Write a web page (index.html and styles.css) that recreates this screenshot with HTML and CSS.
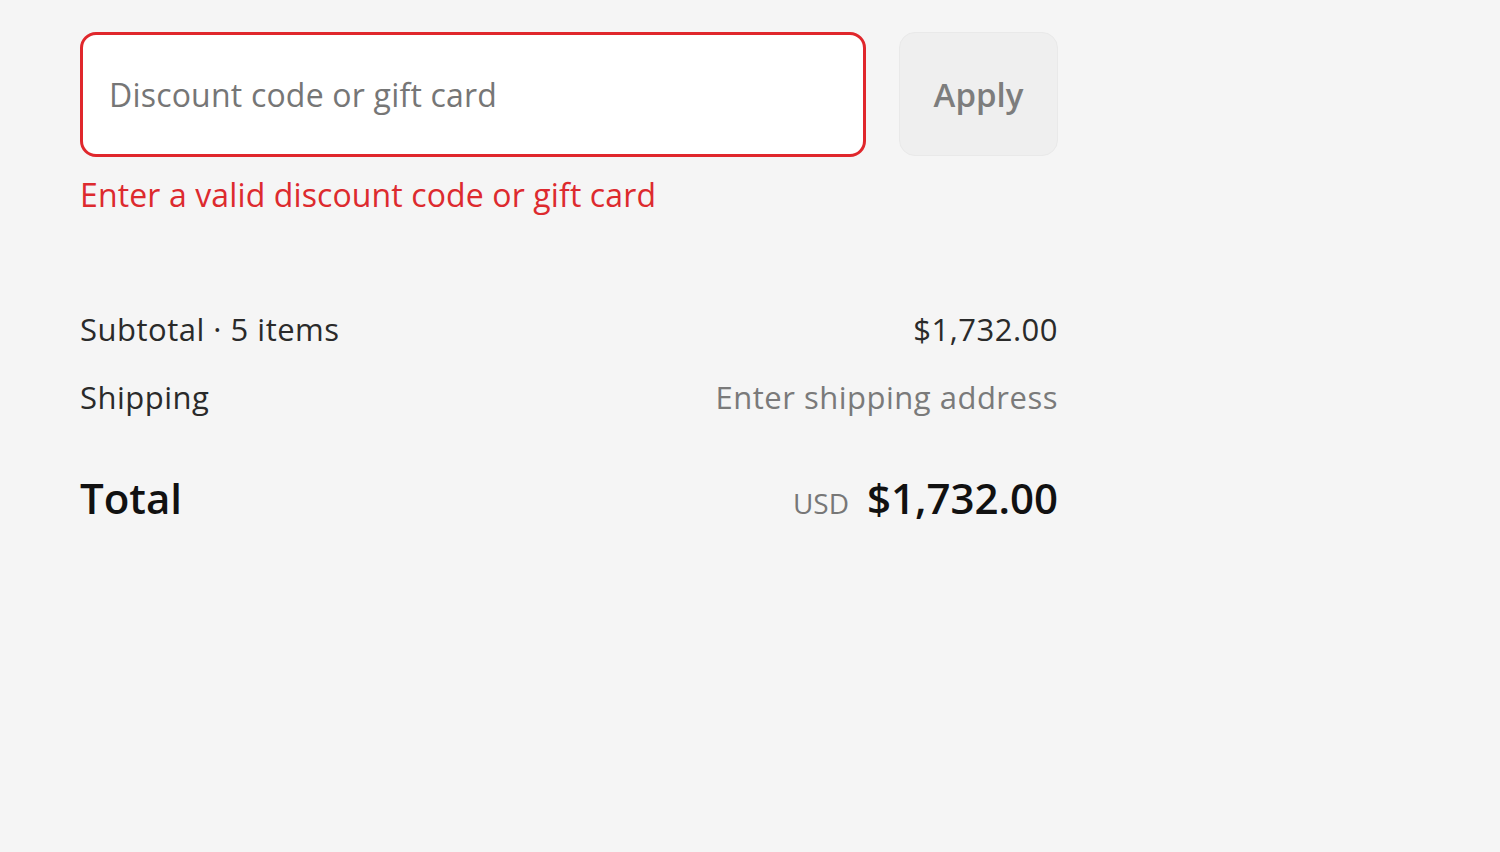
FILE: index.html
```html
<!DOCTYPE html>
<html lang="en">
<head>
<meta charset="utf-8">
<title>Checkout summary</title>
<link rel="stylesheet" href="styles.css">
</head>
<body>
<main class="summary">
  <form class="discount" onsubmit="return false">
    <div class="discount-row">
      <input class="discount-input" type="text" placeholder="Discount code or gift card">
      <button class="apply-btn" type="submit">Apply</button>
    </div>
    <p class="error">Enter a valid discount code or gift card</p>
  </form>
  <section class="lines">
    <div class="line">
      <span class="label">Subtotal · 5 items</span>
      <span class="value">$1,732.00</span>
    </div>
    <div class="line">
      <span class="label">Shipping</span>
      <span class="value muted">Enter shipping address</span>
    </div>
    <div class="line total">
      <span class="total-label">Total</span>
      <span class="total-value"><span class="currency">USD</span><span class="amount">$1,732.00</span></span>
    </div>
  </section>
</main>
</body>
</html>
```
FILE: styles.css
```css
html, body {
  margin: 0;
  padding: 0;
  background: #f5f5f5;
}
body {
  font-family: "Open Sans", "Noto Sans", sans-serif;
  color: #1f1f1f;
}
.summary {
  width: 978px;
  margin-left: 80px;
  padding-top: 32px;
}
.discount-row {
  display: flex;
  gap: 33px;
}
.discount-input {
  flex: 1;
  height: 125px;
  box-sizing: border-box;
  border: 3px solid #e0272c;
  border-radius: 16px;
  background: #fff;
  padding: 0 26px;
  font-family: inherit;
  font-size: 32px;
  letter-spacing: 0.2px;
  outline: none;
}
.discount-input::placeholder {
  color: #767676;
}
.apply-btn {
  width: 159px;
  height: 124px;
  box-sizing: border-box;
  border: 1px solid #e9e9e9;
  border-radius: 16px;
  background: #efefef;
  color: #7d7d7d;
  font-family: inherit;
  font-size: 33px;
  font-weight: 600;
}
.error {
  margin: 16px 0 0;
  color: #dd2a2e;
  font-size: 32px;
  letter-spacing: 0.12px;
  line-height: 44px;
}
.lines {
  margin-top: 78px;
}
.line {
  display: flex;
  justify-content: space-between;
  align-items: baseline;
  font-size: 31px;
  letter-spacing: 0.5px;
  line-height: 68px;
  color: #2a2a2a;
}
.muted {
  color: #7a7a7a;
}
.total {
  margin-top: 33px;
  letter-spacing: 0;
}
.total-label {
  font-size: 42px;
  font-weight: 600;
  color: #111;
}
.total-value {
  display: flex;
  align-items: baseline;
  gap: 18px;
}
.currency {
  font-size: 28px;
  color: #777;
}
.amount {
  font-size: 42px;
  font-weight: 600;
  color: #111;
}
```
